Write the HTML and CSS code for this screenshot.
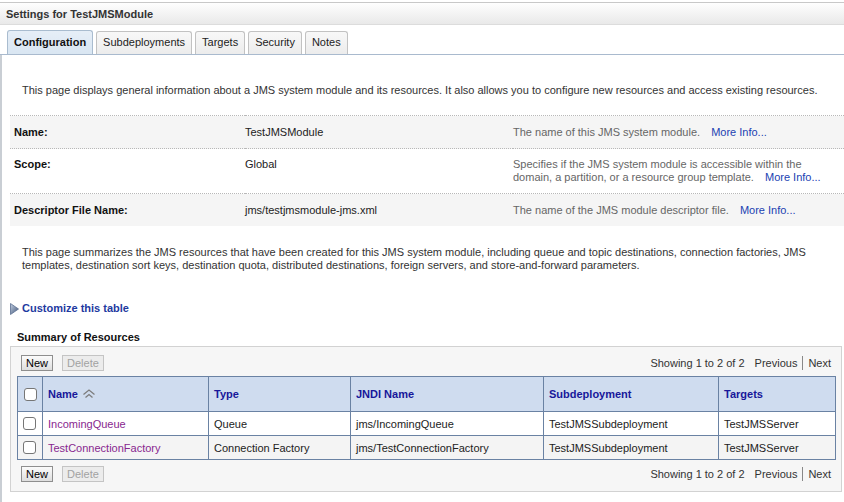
FILE: index.html
```html
<!DOCTYPE html>
<html>
<head>
<meta charset="utf-8">
<title>Settings for TestJMSModule</title>
<link rel="stylesheet" href="styles.css">
</head>
<body>
<div class="titlebar">Settings for TestJMSModule</div>
<div class="tabs">
  <span class="tab active">Configuration</span>
  <span class="tab">Subdeployments</span>
  <span class="tab">Targets</span>
  <span class="tab">Security</span>
  <span class="tab">Notes</span>
</div>
<div class="content">
  <p class="intro">This page displays general information about a JMS system module and its resources. It also allows you to configure new resources and access existing resources.</p>
  <table class="props">
    <colgroup><col class="c-label"><col class="c-value"><col class="c-desc"></colgroup>
    <tr class="shade">
      <td class="label">Name:</td>
      <td class="value">TestJMSModule</td>
      <td class="desc">The name of this JMS system module. <a class="more">More Info...</a></td>
    </tr>
    <tr class="tall">
      <td class="label">Scope:</td>
      <td class="value">Global</td>
      <td class="desc"><span class="line">Specifies if the JMS system module is accessible within the</span><span class="line">domain, a partition, or a resource group template. <a class="more">More Info...</a></span></td>
    </tr>
    <tr class="shade">
      <td class="label">Descriptor File Name:</td>
      <td class="value">jms/testjmsmodule-jms.xml</td>
      <td class="desc">The name of the JMS module descriptor file. <a class="more">More Info...</a></td>
    </tr>
  </table>
  <p class="summary">This page summarizes the JMS resources that have been created for this JMS system module, including queue and topic destinations, connection factories, JMS templates, destination sort keys, destination quota, distributed destinations, foreign servers, and store-and-forward parameters.</p>
  <div class="customize">
    <svg class="tri" width="9" height="12" viewBox="0 0 9 12">
      <defs>
        <linearGradient id="tg" x1="0" y1="0" x2="1" y2="1">
          <stop offset="0" stop-color="#c3cfe2"/>
          <stop offset="1" stop-color="#3f5577"/>
        </linearGradient>
      </defs>
      <polygon points="0.5,0.5 8.5,6 0.5,11.5" fill="url(#tg)" stroke="#5b6f90" stroke-width="0.8"/>
    </svg>
    <a class="customize-link">Customize this table</a>
  </div>
  <div class="section-title">Summary of Resources</div>
  <div class="panel">
    <div class="toolbar">
      <div class="buttons"><span class="btn">New</span><span class="btn disabled">Delete</span></div>
      <div class="pager">Showing 1 to 2 of 2<span class="prev">Previous</span><span class="sep"></span><span>Next</span></div>
    </div>
    <table class="grid">
      <colgroup>
        <col class="g-check"><col class="g-name"><col class="g-type"><col class="g-jndi"><col class="g-sub"><col class="g-targets">
      </colgroup>
      <thead>
        <tr>
          <th class="chk"><span class="box"></span></th>
          <th>Name <svg class="sort" width="14" height="10" viewBox="0 0 14 10"><path d="M1.5 5.5 L7 1 L12.5 5.5" fill="none" stroke="#7d7d7d" stroke-width="1.3"/><path d="M3.5 8.5 L7 5.5 L10.5 8.5" fill="none" stroke="#7d7d7d" stroke-width="1.3"/></svg></th>
          <th>Type</th>
          <th>JNDI Name</th>
          <th>Subdeployment</th>
          <th>Targets</th>
        </tr>
      </thead>
      <tbody>
        <tr>
          <td class="chk"><span class="box"></span></td>
          <td><a class="res">IncomingQueue</a></td>
          <td>Queue</td>
          <td>jms/IncomingQueue</td>
          <td>TestJMSSubdeployment</td>
          <td>TestJMSServer</td>
        </tr>
        <tr class="alt">
          <td class="chk"><span class="box"></span></td>
          <td><a class="res">TestConnectionFactory</a></td>
          <td>Connection Factory</td>
          <td>jms/TestConnectionFactory</td>
          <td>TestJMSSubdeployment</td>
          <td>TestJMSServer</td>
        </tr>
      </tbody>
    </table>
    <div class="toolbar bottom">
      <div class="buttons"><span class="btn">New</span><span class="btn disabled">Delete</span></div>
      <div class="pager">Showing 1 to 2 of 2<span class="prev">Previous</span><span class="sep"></span><span>Next</span></div>
    </div>
  </div>
</div>
</body>
</html>
```
FILE: styles.css
```css
* { box-sizing: border-box; }
html, body { margin: 0; padding: 0; background: #fff; }
body {
  font-family: "Liberation Sans", Arial, sans-serif;
  font-size: 11px;
  color: #333;
  width: 844px;
  height: 502px;
  overflow: hidden;
}
a { cursor: pointer; }

.titlebar {
  margin-top: 2px;
  height: 23px;
  border-top: 1px solid #c8c8c8;
  border-bottom: 1px solid #dcdcdc;
  background: linear-gradient(#fefefe, #e9e9e9);
  font-weight: bold;
  color: #333;
  line-height: 22px;
  padding-left: 6px;
}

.tabs {
  display: flex;
  align-items: flex-end;
  gap: 3px;
  height: 30px;
  padding-left: 7px;
  border-bottom: 1px solid #a9bace;
}
.tab {
  display: block;
  height: 23px;
  line-height: 21px;
  padding: 0 6px;
  border: 1px solid #c2c2c2;
  border-bottom: none;
  border-radius: 3px 3px 0 0;
  background: linear-gradient(#f8f8f8, #ececec);
  color: #222;
}
.tab.active {
  height: 24px;
  line-height: 23px;
  font-weight: bold;
  color: #111;
  background: linear-gradient(#e6eef7, #d9e6f2);
  border-color: #a9bccf;
}

.content {
  border-left: 2px solid #c9ced4;
  height: 447px;
}

.intro {
  margin: 0;
  padding: 29px 0 0 20px;
  line-height: 13px;
}

.props {
  margin: 18px 0 0 8px;
  width: 834px;
  border-collapse: collapse;
  table-layout: fixed;
}
.c-label { width: 235px; }
.c-value { width: 268px; }
.props td {
  border-top: 1px dotted #b8b8b8;
  padding: 10px 4px 9px 4px;
  line-height: 13px;
  vertical-align: top;
}
.props tr.tall td { padding-top: 9px; padding-bottom: 9px; }
.props tr.shade td { background: #f5f5f5; }
.props td.label { font-weight: bold; color: #111; }
.props td.value { color: #222; padding-left: 0; }
.props td.desc { color: #666; padding-left: 0; }
.props .line { display: block; white-space: nowrap; line-height: 13px; }
.more { color: #2142b2; margin-left: 8px; white-space: nowrap; }

.summary {
  margin: 20px 0 0 0;
  padding: 0 20px 0 20px;
  line-height: 13px;
  width: 842px;
}

.customize {
  margin: 29px 0 0 8px;
  height: 15px;
  display: flex;
  align-items: center;
  gap: 3px;
}
.tri { display: block; }
.customize-link { font-weight: bold; color: #1e3a9f; line-height: 15px; }

.section-title {
  margin: 15px 0 0 15px;
  font-weight: bold;
  color: #111;
  line-height: 13px;
}

.panel {
  margin: 2px 0 0 8px;
  width: 832px;
  border: 1px solid #d2d2d2;
  background: #f6f6f6;
  padding: 8px 7px 9px 6px;
}

.toolbar {
  display: flex;
  justify-content: space-between;
  align-items: center;
  height: 16px;
  padding: 0 3px 0 4px;
}
.toolbar.bottom { margin-top: 6px; }
.buttons { display: flex; gap: 9px; }
.btn {
  display: block;
  height: 16px;
  line-height: 14px;
  padding: 0 4px;
  border: 1px solid #8e8e8e;
  background: linear-gradient(#fbfbfb, #dedede);
  color: #000;
}
.btn.disabled {
  border-color: #c4c4c4;
  background: #ececec;
  color: #a2a2a2;
}
.pager { display: flex; align-items: center; color: #333; }
.prev { margin-left: 10px; }
.sep {
  display: block;
  width: 1px;
  height: 14px;
  background: #888;
  margin: 0 5px 0 5px;
}

.grid {
  margin-top: 5px;
  width: 818px;
  border-collapse: collapse;
  table-layout: fixed;
  border: 1px solid #6a82a3;
}
.g-check { width: 25px; }
.g-name { width: 166px; }
.g-type { width: 142px; }
.g-jndi { width: 193px; }
.g-sub { width: 175px; }
.g-targets { width: 117px; }
.grid th, .grid td {
  border: 1px solid #6a82a3;
  text-align: left;
  padding: 0 5px;
  white-space: nowrap;
  overflow: hidden;
}
.grid th {
  height: 35px;
  background: #cfdcef;
  color: #17179a;
  font-weight: bold;
}
.grid td {
  height: 24px;
  background: #fff;
  color: #222;
}
.grid tr.alt td { background: #f4f4f4; }
.grid .chk { padding: 0 0 0 6px; }
.grid td.chk { padding-left: 5px; }
.box {
  display: block;
  width: 13px;
  height: 13px;
  border: 1px solid #767676;
  border-radius: 3px;
  background: #fff;
}
.sort { vertical-align: -1px; margin-left: 1px; }
.res { color: #88278f; }
```
